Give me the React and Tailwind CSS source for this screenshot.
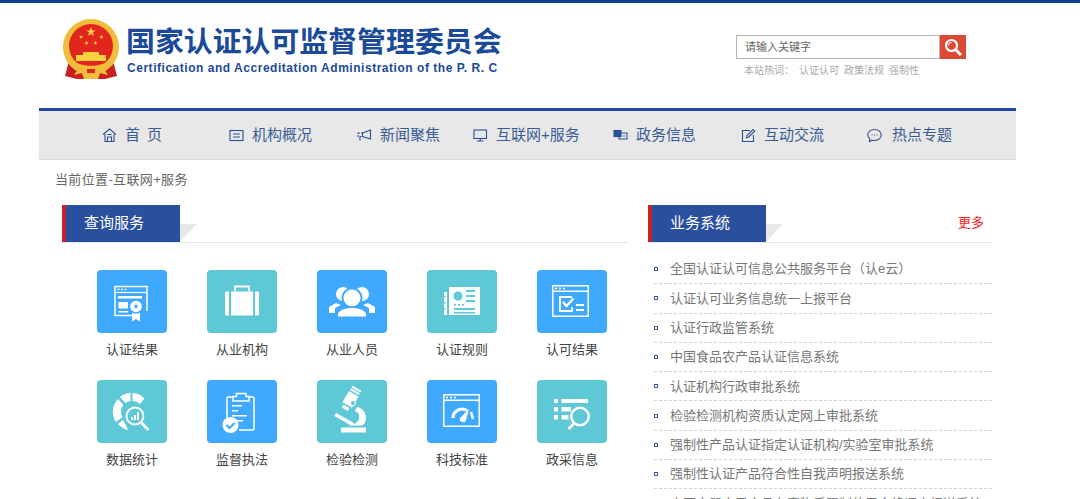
import React from 'react';

const sans = '"Liberation Sans", "Noto Sans CJK SC", sans-serif';

const starPoints = '0,-5 1.2,-1.6 4.8,-1.5 1.9,0.6 2.9,4 0,2 -2.900,4 -1.900,0.600 -4.800,-1.500 -1.200,-1.600';

const Emblem = () => (
  <svg width="56" height="61" viewBox="0 0 56 61" className="shrink-0">
    <path d="M6 42 L2 57 L14 60 L42 60 L54 57 L50 42 Z" fill="#c8201d" />
    <circle cx="28" cy="28" r="28" fill="#f2bd3c" />
    <circle cx="28" cy="27" r="22" fill="#e2261d" />
    <polygon points={starPoints} transform="translate(28 13)" fill="#f8d23f" />
    <polygon points={starPoints} transform="translate(18 18) scale(.45)" fill="#f8d23f" />
    <polygon points={starPoints} transform="translate(38.500 18) scale(.45)" fill="#f8d23f" />
    <polygon points={starPoints} transform="translate(23.500 24) scale(.45)" fill="#f8d23f" />
    <polygon points={starPoints} transform="translate(32.500 24) scale(.45)" fill="#f8d23f" />
    <path d="M20 33 H36 V36 H43 V42 H13 V36 H20 Z" fill="#f8d23f" />
    <path d="M8 40 C16 49 40 49 48 40 L50 45 C42 55 14 55 6 45 Z" fill="#f2bd3c" />
    <path d="M15 50 C21 47 35 47 41 50 L45 56 L37 54 L35 60 H21 L19 54 L11 56 Z" fill="#f2bd3c" />
    <rect x="24" y="50" width="8" height="4" fill="#d3291f" />
  </svg>
);

const NavIcon = ({ children }) => (
  <svg width="15" height="15" viewBox="0 0 15 15" fill="none" stroke="#2a5095" strokeWidth="1.1" className="shrink-0">
    {children}
  </svg>
);

const navItems = [
  {
    name: '首 页',
    box: 'w-[190px] pl-[63px]',
    text: 'tracking-[1.4px]',
    icon: <><path d="M1 6.500 7.500 1 14 6.500" /><path d="M3 6v7.500h9V6" /><path d="M5.500 13.500V9h4v4.500" /><path d="M5.500 6.500h4" /></>,
  },
  {
    name: '机构概况',
    box: 'w-[128px]',
    icon: <><rect x="1" y="2.500" width="13" height="10" /><path d="M4 6h7M4 9h7" /></>,
  },
  {
    name: '新闻聚焦',
    box: 'w-[116px]',
    icon: <><path d="M5.500 5 13.500 2v9L5.500 8.500Z" /><path d="M1 5h4.500v3.500H1Z" strokeDasharray="2 1" /><path d="M3 9v3.500" /></>,
  },
  {
    name: '互联网+服务',
    box: 'w-[140px]',
    icon: <><rect x="1" y="2" width="12.500" height="8.500" /><path d="M4 13h6.500M7.200 10.500V13" /></>,
  },
  {
    name: '政务信息',
    box: 'w-[128px]',
    icon: <><rect x="1" y="2.500" width="7" height="6" fill="#2a5095" /><path d="M8 5h6v6H6V8.500" /><path d="M10 8h2" /></>,
  },
  {
    name: '互动交流',
    box: 'w-[126px]',
    icon: <><path d="M9 2.500H1.500v11h11V7" /><path d="M5.500 9.500 6 7.500 12 1.500 13.800 3.200 7.500 9.200Z" /></>,
  },
  {
    name: '热点专题',
    box: 'w-[90px] gap-[10px]',
    icon: <><path d="M7.500 1.500C11.500 1.500 14.200 4 14.200 7s-2.700 5.500-6.700 5.500c-.8 0-1.600-.1-2.300-.3L2.500 13.500l.3-2.700C1.500 9.800.8 8.500.8 7 .8 4 3.500 1.500 7.500 1.500Z" /><path d="M4.500 7h1M7 7h1M9.500 7h1" /></>,
  },
];

const WindowFrame = ({ x, y, w, h, fill }) => (
  <>
    <rect x={x} y={y} width={w} height={h} rx="1" fill="#fff" />
    <rect x={x + 1.500} y={y + 1.500} width={w - 3} height="4" fill={fill} />
    <rect x={x + 1.500} y={y + 7} width={w - 3} height={h - 8.500} fill={fill} />
    <circle cx={x + 4} cy={y + 3.500} r="1.100" fill="#fff" />
    <circle cx={x + 8} cy={y + 3.500} r="1.100" fill="#fff" />
    <circle cx={x + 12} cy={y + 3.500} r="1.100" fill="#fff" />
  </>
);

// white pictogram on the tile, drawn in a 70x63 box
const tiles = [
  {
    name: '认证结果',
    bg: 'bg-[#3fa9ff]',
    icon: (
      <>
        <path d="M35 45.500H18V16.500h32V41" fill="none" stroke="#fff" strokeWidth="1.500" />
        <path d="M18 22.500h32" stroke="#fff" strokeWidth="1.200" />
        <circle cx="21.500" cy="19.500" r="1" fill="#fff" />
        <circle cx="25" cy="19.500" r="1" fill="#fff" />
        <circle cx="28.500" cy="19.500" r="1" fill="#fff" />
        <path d="M21 26h24v2.500H21Z" fill="#fff" />
        <path d="M21.500 32h9.500v6.500h-9.500Z" fill="#fff" />
        <path d="M21.500 41h9.500v1.500h-9.500Z" fill="#fff" />
        <path d="M35 41v10.500l4-2.500 4 2.500V41Z" fill="#fff" />
        <circle cx="39" cy="36.500" r="6.500" fill="#fff" stroke="#3fa9ff" strokeWidth="1.500" />
        <polygon points={starPoints} transform="translate(39 36.500) scale(.6)" fill="#3fa9ff" />
      </>
    ),
  },
  {
    name: '从业机构',
    bg: 'bg-[#5ec8d6]',
    icon: (
      <>
        <path d="M28 21v-4.500h14V21" fill="none" stroke="#fff" strokeWidth="1.800" />
        <path d="M19 21.500h3v24h-3a1 1 0 0 1-1-1v-22a1 1 0 0 1 1-1Z" fill="#fff" />
        <path d="M24 21.500h22v24H24Z" fill="#fff" />
        <path d="M48 21.500h3a1 1 0 0 1 1 1v22a1 1 0 0 1-1 1h-3Z" fill="#fff" />
      </>
    ),
  },
  {
    name: '从业人员',
    bg: 'bg-[#3fa9ff]',
    icon: (
      <>
        <circle cx="26" cy="24" r="7" fill="#fff" />
        <circle cx="45" cy="24" r="7" fill="#fff" />
        <path d="M12 37l7-4 5 2-6 3v5h-6Z" fill="#fff" />
        <path d="M58 37l-7-4-5 2 6 3v5h6Z" fill="#fff" />
        <circle cx="35" cy="28" r="9.500" fill="#fff" stroke="#3fa9ff" strokeWidth="2" />
        <path d="M21 44c1-4 8-6 14-6s13 2 14 6v2.500H21Z" fill="#fff" />
      </>
    ),
  },
  {
    name: '认证规则',
    bg: 'bg-[#5ec8d6]',
    icon: (
      <>
        <path d="M22 17h30a1 1 0 0 1 1 1v26a1 1 0 0 1-1 1H22Z" fill="#fff" />
        <path d="M17 22h3v23h-3Z" fill="#fff" />
        <path d="M17 26h1.500v1.500H17ZM17 32h1.500v1.500H17ZM17 38h1.500v1.500H17Z" fill="#5ec8d6" />
        <circle cx="31" cy="26" r="4.500" fill="#5ec8d6" />
        <path d="M39 20h9v2h-9ZM39 25h9v2h-9ZM39 30h9v2h-9ZM27 38h21v2H27ZM27 42h21v1.500H27Z" fill="#5ec8d6" />
        <path d="M27 34h2v1.500h-2ZM31 34h2v1.500h-2ZM35 34h2v1.500h-2Z" fill="#5ec8d6" />
      </>
    ),
  },
  {
    name: '认可结果',
    bg: 'bg-[#3fa9ff]',
    icon: (
      <>
        <WindowFrame x={15} y={15} w={37} h={32} fill="#3fa9ff" />
        <path d="M35 27H23v14h12v-4" fill="none" stroke="#fff" strokeWidth="1.800" />
        <path d="M26 32l3.500 4 7-7.500" fill="none" stroke="#fff" strokeWidth="2.200" />
        <path d="M39 34h8v2h-8ZM39 39h8v2h-8Z" fill="#fff" />
      </>
    ),
  },
  {
    name: '数据统计',
    bg: 'bg-[#5ec8d6]',
    icon: (
      <>
        <path d="M33.500 13v8a9 9 0 0 0-5 2L23 17a16 16 0 0 1 10.500-4Z" fill="#fff" />
        <path d="M21 19l5.500 6a10 10 0 0 0-1 12L19 42a18 18 0 0 1 2-23Z" fill="#fff" />
        <path d="M35.500 13a17 17 0 0 1 12 5.500L43 24a10 10 0 0 0-7.500-3Z" fill="#fff" />
        <path d="M21 44l5-4 3 5 2 5a18 18 0 0 1-10-6Z" fill="#fff" />
        <circle cx="38" cy="36" r="11" fill="#5ec8d6" />
        <circle cx="38" cy="36" r="8.500" fill="none" stroke="#fff" strokeWidth="1.800" />
        <path d="M34 37h2v3h-2ZM37 35h2v5h-2ZM40 32h2v8h-2Z" fill="#fff" />
        <path d="M44.500 43l7 7" stroke="#fff" strokeWidth="2.800" />
      </>
    ),
  },
  {
    name: '监督执法',
    bg: 'bg-[#3fa9ff]',
    icon: (
      <>
        <path d="M26 17h-5a1 1 0 0 0-1 1v22M42 17h4a1 1 0 0 1 1 1v31a1 1 0 0 1-1 1H32" fill="none" stroke="#fff" strokeWidth="1.500" />
        <path d="M26 21v-4.500h3.500V13.500h9.500v3H42V21Z" fill="none" stroke="#fff" strokeWidth="1.500" />
        <path d="M25 25h10v1.500H25ZM25 30h6v1.500h-6ZM25 35h15v1.500H25ZM30 40h6v1.500h-6Z" fill="#fff" />
        <circle cx="23.500" cy="45" r="8" fill="#fff" />
        <path d="M19.500 45l3 3 5-5" fill="none" stroke="#3fa9ff" strokeWidth="2" />
      </>
    ),
  },
  {
    name: '检验检测',
    bg: 'bg-[#5ec8d6]',
    icon: (
      <>
        <path d="M24 47.500h25v5H24Z" fill="#fff" />
        <g transform="rotate(30 32 22)" fill="#fff">
          <rect x="27" y="6" width="10" height="2" />
          <rect x="27" y="9" width="10" height="2" />
          <rect x="26.500" y="12.500" width="11" height="13" />
          <rect x="28.500" y="27" width="7" height="3.500" />
        </g>
        <circle cx="36" cy="23" r="2.500" fill="#5ec8d6" stroke="#fff" />
        <path d="M40 27c6 1 9 6 9 11 0 3-1 6-4 7.500H32c5-1 9-3 10-7 .8-3.500-.5-6-4-7.500Z" fill="#fff" />
        <path d="M19 33l18 10-1.800 3-18-10Z" fill="#fff" />
      </>
    ),
  },
  {
    name: '科技标准',
    bg: 'bg-[#3fa9ff]',
    icon: (
      <>
        <WindowFrame x={16} y={14} w={37} h={33} fill="#3fa9ff" />
        <path d="M26 38c0-6 5-9 9-9 2 0 3.500.5 5 1.500" fill="none" stroke="#fff" strokeWidth="3" />
        <path d="M44 32l2 7" fill="none" stroke="#fff" strokeWidth="2.500" />
        <path d="M33 38l9-9-3 11a3 3 0 0 1-6-2Z" fill="#fff" />
      </>
    ),
  },
  {
    name: '政采信息',
    bg: 'bg-[#5ec8d6]',
    icon: (
      <>
        <path d="M17 19h4v4h-4ZM24.500 19H51v4H24.500ZM17 27h4v4.500h-4ZM24.500 27h9.500v4.500h-9.500ZM17 35h4v4.500h-4ZM24.500 35h7v4.500h-7Z" fill="#fff" />
        <circle cx="43" cy="36.500" r="8.800" fill="#5ec8d6" stroke="#fff" strokeWidth="2.400" />
        <path d="M37.500 43l-6 6" stroke="#fff" strokeWidth="2.800" />
      </>
    ),
  },
];

const systems = [
  '全国认证认可信息公共服务平台（认e云）',
  '认证认可业务信息统一上报平台',
  '认证行政监管系统',
  '中国食品农产品认证信息系统',
  '认证机构行政审批系统',
  '检验检测机构资质认定网上审批系统',
  '强制性产品认证指定认证机构/实验室审批系统',
  '强制性认证产品符合性自我声明报送系统',
  '中国电器电子产品有害物质限制使用合格评定报送系统',
];

const SectionTitle = ({ title, children }) => (
  <div className="flex h-[38px] items-start justify-between border-b border-[#e5e5e5]">
    <div className="flex">
      <div className="flex h-[37px] w-[118px] items-center border-l-4 border-[#c9202b] bg-[#2a4f9e] pl-[18px] text-[15px] text-white">
        {title}
      </div>
      <div className="mt-[19px] h-0 w-0 border-t-[18px] border-r-[17px] border-t-[#e8e8e8] border-r-transparent" />
    </div>
    {children}
  </div>
);

export default function App() {
  return (
    <div className="h-[499px] overflow-hidden bg-white" style={{ fontFamily: sans }}>
      <div className="h-[3px] bg-[#0f3f8f]" />

      {/* Header */}
      <div className="flex h-[105px] items-start justify-between pl-[63px] pr-[114px]">
        <div className="mt-4 flex gap-2">
          <Emblem />
          <div className="pt-[5px]">
            <div className="-ml-px text-[28.900px] font-bold leading-[36px] text-[#1a4a98] whitespace-nowrap">
              国家认证认可监督管理委员会
            </div>
            <div className="text-[12px] font-bold leading-[16px] tracking-[0.530px] text-[#1a4a98] whitespace-nowrap">
              Certification and Accreditation Administration of the P. R. C
            </div>
          </div>
        </div>
        <div className="mt-8 w-[230px]">
          <div className="flex h-6">
            <div className="flex flex-1 items-center border border-[#b5b5b5] pl-2 text-[11px] text-[#666]">请输入关键字</div>
            <div className="flex w-[26px] items-center justify-center bg-[#dc4a36]">
              <svg width="20" height="20" viewBox="0 0 20 20" fill="none" stroke="#fff">
                <circle cx="8.500" cy="8.500" r="5.500" strokeWidth="2.200" />
                <path d="M5.500 8.500a3 3 0 0 1 3-3" strokeWidth="1" />
                <path d="M12.800 12.800 18 18" strokeWidth="3" />
              </svg>
            </div>
          </div>
          <div className="mt-[5px] flex pl-2 text-[10px] leading-[14px] text-[#a8a8a8]">
            <span className="mr-[5px]">本站热词：</span>
            <span className="mr-[5px]">认证认可</span>
            <span className="mr-[5px]">政策法规</span>
            <span>强制性</span>
          </div>
        </div>
      </div>

      <div className="ml-[39px] w-[977px]">
        {/* Nav */}
        <div className="flex h-[52px] items-center border-t-[3px] border-b border-t-[#1f4ba5] border-b-[#d9d9d9] bg-[#e8e8e8] pt-px">
          {navItems.map((item) => (
            <div key={item.name} className={`flex items-center gap-2 ${item.box} shrink-0 text-[15px] text-[#3a5c96] whitespace-nowrap`}>
              <NavIcon>{item.icon}</NavIcon>
              <span className={item.text}>{item.name}</span>
            </div>
          ))}
        </div>

        <div className="pl-4 pt-[11px] text-[13px] leading-[18px] tracking-[0.350px] text-[#666]">当前位置-互联网+服务</div>

        <div className="mt-[16px] flex pl-[23px]">
          {/* Query services */}
          <div className="w-[567px]">
            <SectionTitle title="查询服务" />
            <div className="mt-[27px] grid grid-cols-[repeat(5,110px)] gap-y-[21px] pl-[35px]">
              {tiles.map((tile) => (
                <div key={tile.name} className="w-[70px]">
                  <div className={`h-[63px] w-[70px] rounded-[4px] ${tile.bg}`}>
                    <svg width="70" height="63" viewBox="0 0 70 63">{tile.icon}</svg>
                  </div>
                  <div className="mt-[8px] text-center text-[13px] leading-[18px] text-[#444] whitespace-nowrap">{tile.name}</div>
                </div>
              ))}
            </div>
          </div>

          {/* Business systems */}
          <div className="ml-[19px] w-[344px]">
            <SectionTitle title="业务系统">
              <span className="mr-2 mt-[9px] text-[13px] leading-[18px] text-[#ff2020]">更多</span>
            </SectionTitle>
            <ul className="mt-[12px] pl-[6px]">
              {systems.map((s) => (
                <li key={s} className="flex h-[29.300px] items-center border-b border-dashed border-[#d5d5d5] text-[13px] text-[#777] whitespace-nowrap">
                  <span className="mr-3 h-1 w-1 shrink-0 border border-[#3f5f9f]" />
                  {s}
                </li>
              ))}
            </ul>
          </div>
        </div>
      </div>
    </div>
  );
}
